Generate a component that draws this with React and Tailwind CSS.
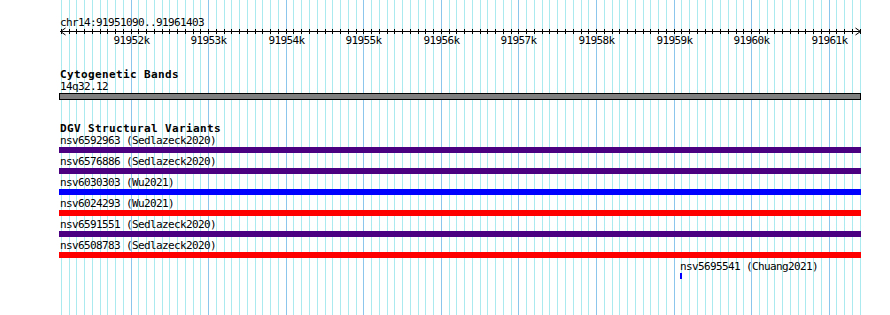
import React from "react";

const START = 91951090;
const END = 91961403;
const SCALE = 800 / (END - START);
const px = (bp) => Math.round(60 + (bp - START) * SCALE);

const grid = [];
for (let bp = 91951100; bp <= 91961400; bp += 100) {
  grid.push({ x: px(bp), major: bp % 1000 === 0 });
}
const majors = [];
for (let k = 91952; k <= 91961; k++) majors.push({ k, x: px(k * 1000) });

const features = [
  { name: "nsv6592963 (Sedlazeck2020)", color: "bg-[#4b0082]" },
  { name: "nsv6576886 (Sedlazeck2020)", color: "bg-[#4b0082]" },
  { name: "nsv6030303 (Wu2021)", color: "bg-[#0000ff]" },
  { name: "nsv6024293 (Wu2021)", color: "bg-[#ff0000]" },
  { name: "nsv6591551 (Sedlazeck2020)", color: "bg-[#4b0082]" },
  { name: "nsv6508783 (Sedlazeck2020)", color: "bg-[#ff0000]" },
];

const mono = "font-['DejaVu_Sans_Mono',monospace] text-[11px] tracking-[-0.62px] text-black";
const bold = "font-['DejaVu_Sans_Mono',monospace] text-[11px] font-bold tracking-[0.38px] text-black";

function GridAndRuler() {
  return (
    <svg
      className="absolute left-0 top-0"
      width="890"
      height="315"
      viewBox="0 0 890 315"
    >
      {grid.map((g, i) => (
        <line
          key={i}
          x1={g.x + 0.5}
          x2={g.x + 0.5}
          y1="0"
          y2="315"
          stroke={g.major ? "#8cc6ec" : "#abebf0"}
          strokeWidth="1"
          shapeRendering="crispEdges"
        />
      ))}
      <line x1="60" x2="861" y1="31.5" y2="31.5" stroke="#000" strokeWidth="1" shapeRendering="crispEdges" />
      {grid.map((g, i) => (
        <line
          key={"t" + i}
          x1={g.x + 0.5}
          x2={g.x + 0.5}
          y1="29"
          y2="34"
          stroke="#000"
          strokeWidth="1"
          shapeRendering="crispEdges"
        />
      ))}
      <polyline points="65.5,28 60.5,31.5 65.5,35" fill="none" stroke="#000" strokeWidth="1" />
      <polyline points="855.5,28 860.5,31.5 855.5,35" fill="none" stroke="#000" strokeWidth="1" />
    </svg>
  );
}

export default function App() {
  return (
    <div className="relative w-[890px] h-[315px] bg-white overflow-hidden">
      <GridAndRuler />
      <div className="relative flex flex-col pt-[16px]">
        <div className={`${mono} h-[13px] leading-[13px] pl-[60px] whitespace-pre`}>
          chr14:91951090..91961403
        </div>
        <div className="relative h-[13px] mt-[5px]">
          {majors.map((m) => (
            <span
              key={m.k}
              className={`${mono} absolute top-0 leading-[13px] -translate-x-1/2 whitespace-pre`}
              style={{ left: m.x + 0.5 }}
            >
              {m.k}k
            </span>
          ))}
        </div>

        <div className={`${bold} h-[12px] leading-[13px] mt-[21px] pl-[60px] whitespace-pre`}>
          Cytogenetic Bands
        </div>
        <div className={`${mono} h-[13px] leading-[13px] pl-[60px] whitespace-pre`}>14q32.12</div>
        <div className="ml-[59px] w-[802px] h-[7px] border border-black bg-[#808080]" />

        <div className={`${bold} h-[12px] leading-[13px] mt-[22px] pl-[60px] whitespace-pre`}>
          DGV Structural Variants
        </div>
        {features.map((f) => (
          <div key={f.name} className="flex flex-col pb-[2px]">
            <div className={`${mono} h-[13px] leading-[13px] pl-[60px] whitespace-pre`}>{f.name}</div>
            <div className={`ml-[59px] w-[802px] h-[6px] ${f.color}`} />
          </div>
        ))}
        <div className="flex flex-col">
          <div className={`${mono} h-[13px] leading-[13px] pl-[680px] whitespace-pre`}>
            nsv5695541 (Chuang2021)
          </div>
          <div className="ml-[680px] w-[2px] h-[6px] bg-[#0000ff]" />
        </div>
      </div>
    </div>
  );
}
